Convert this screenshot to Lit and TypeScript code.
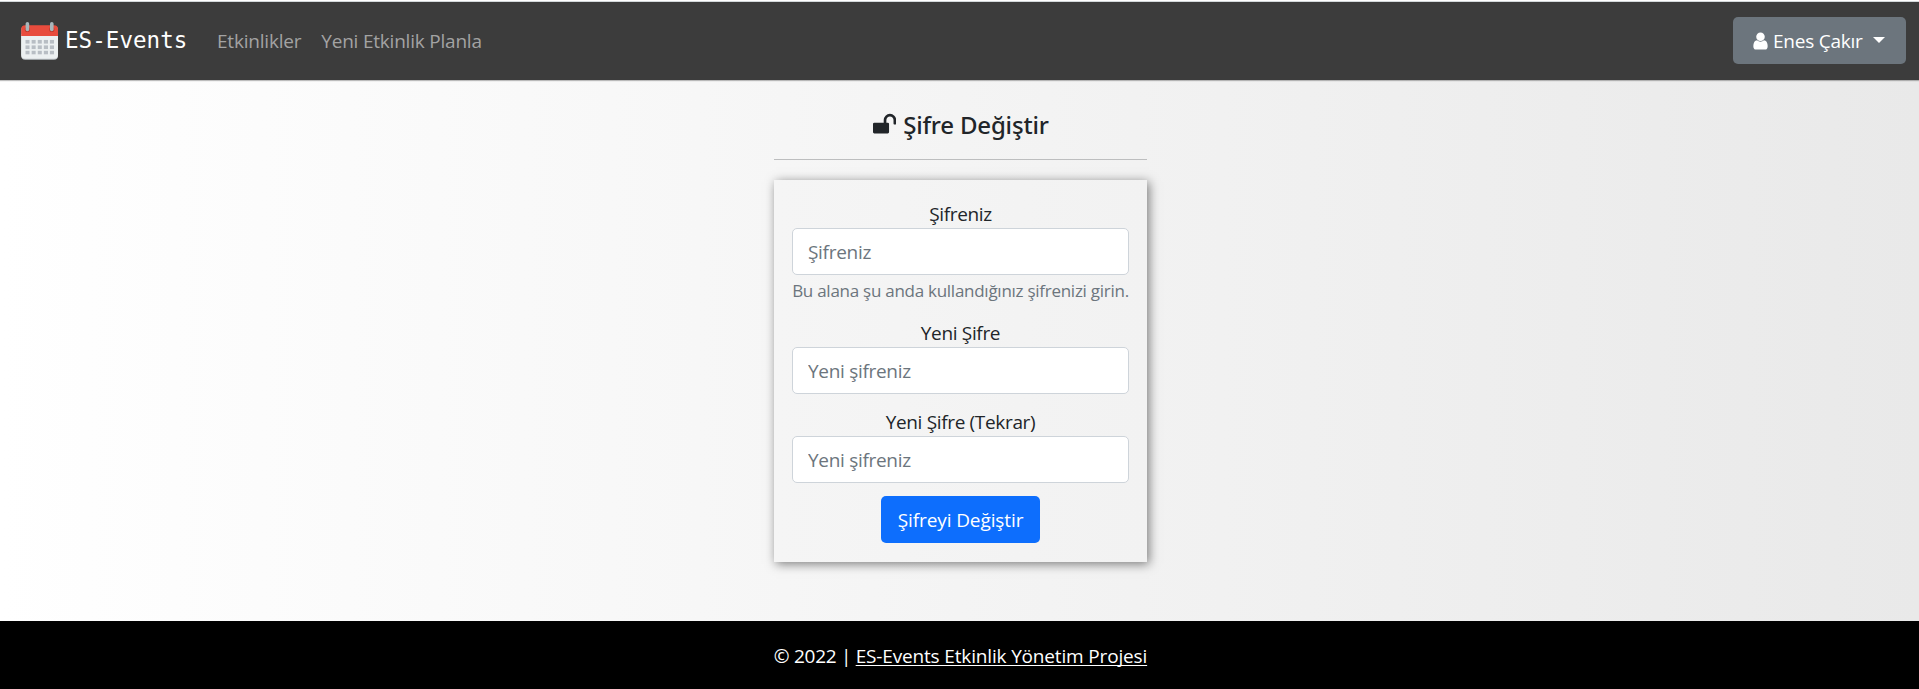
import { LitElement, html, css } from "lit";
import { customElement } from "lit/decorators.js";

const calendar = html`<svg class="calendar" viewBox="0 0 38 38" width="38" height="38">
  <rect x="0.2" y="4" width="36.800" height="33.700" rx="4" fill="#bdc3c7" />
  <path d="M.2 12h36.800v20.800a4 4 0 0 1-4 4H4.200a4 4 0 0 1-4-4z" fill="#ecf0f1" />
  <path d="M4.200 3.300H33a4 4 0 0 1 4 4V14H.2V7.300a4 4 0 0 1 4-4z" fill="#e84c3d" />
  <circle cx="6.400" cy="7.400" r="2.600" fill="#c0392b" />
  <circle cx="30.800" cy="7.400" r="2.600" fill="#c0392b" />
  <rect x="4.600" y="0" width="3.600" height="9.200" rx="1.800" fill="#a9b6bb" />
  <rect x="29" y="0" width="3.600" height="9.200" rx="1.800" fill="#a9b6bb" />
  ${[0, 1, 2].map((r) =>
    [0, 1, 2, 3, 4].map(
      (c) => html`<svg x=${4.3 + c * 6.1} y=${17.8 + r * 5.4} width="4.400" height="4"><rect width="4.400" height="4" fill="#b8bec4" /></svg>`
    )
  )}
</svg>`;

const user = html`<svg class="user" viewBox="0 0 1280 1792" width="15" height="20">
  <path fill="currentColor" d="M1280 1399q0 109-62.500 187T1067 1664H213q-88 0-150.500-78T0 1399q0-85 8.500-160.500t31.500-152 58.500-131 94-89T327 832q131 128 313 128t313-128q76 0 134.500 34.500t94 89 58.500 131 31.500 152 8.500 160.500zM1024 512q0 159-112.500 271.500T640 896 368.500 783.500 256 512t112.500-271.500T640 128t271.500 112.500T1024 512z" />
</svg>`;

const unlock = html`<svg class="unlock" viewBox="0 0 1664 1792" width="23.200" height="25">
  <path fill="currentColor" d="M1664 576v256q0 26-19 45t-45 19h-64q-26 0-45-19t-19-45V576q0-106-75-181t-181-75-181 75-75 181v192h96q40 0 68 28t28 68v576q0 40-28 68t-68 28H96q-40 0-68-28t-28-68V864q0-40 28-68t68-28h672V576q0-185 131.500-316.500T1216 128t316.500 131.500T1664 576z" />
</svg>`;

@customElement("app-root")
export class AppRoot extends LitElement {
  static styles = css`
    * { box-sizing: border-box; }
    :host {
      display: flex;
      flex-direction: column;
      height: 689px;
      overflow: hidden;
      font: 19px/30px "Open Sans", "Noto Sans", sans-serif;
      letter-spacing: -0.34px;
      color: #212529;
      background: linear-gradient(to right, #fff, #e9e9e9);
    }
    a { color: inherit; text-decoration: none; }
    svg { display: block; flex: none; }
    .strip { height: 2px; flex: none; background: #fff; border-bottom: 1px solid #d3d8da; }
    .nav {
      flex: none;
      display: flex;
      align-items: center;
      height: 78px;
      padding: 0 13px 0 21px;
      background: #3c3c3c;
      box-shadow: 0 1px 1px rgba(0, 0, 0, 0.25);
    }
    .brand {
      display: flex;
      align-items: center;
      width: 196px;
      color: #fff;
      font: 22.500px/30px "DejaVu Sans Mono", monospace;
      letter-spacing: 0.05px;
    }
    .calendar { margin-right: 6px; }
    .name { padding-bottom: 3px; }
    .link { color: #a3a3a3; letter-spacing: -0.21px; margin-right: 20px; }
    .account {
      display: flex;
      align-items: center;
      margin: 0 0 1px auto;
      width: 173px;
      height: 47px;
      padding: 0 0 0 20px;
      border: 0;
      border-radius: 5px;
      background: #6c757d;
      color: #fff;
      font: inherit;
      letter-spacing: -0.24px;
    }
    .user { margin-right: 5px; }
    .caret {
      margin: 0 0 2px 10px;
      border: 6px solid transparent;
      border-top-color: currentColor;
      border-bottom: 0;
    }
    .main {
      flex: 1;
      display: flex;
      flex-direction: column;
      align-items: center;
      padding-left: 2px;
    }
    .title {
      display: flex;
      align-items: center;
      width: 373px;
      height: 80px;
      margin: 0 0 20px;
      padding: 10px 0 0 99px;
      border-bottom: 1px solid #bdbebf;
      font: 500 24px/30px "Noto Sans", sans-serif;
      letter-spacing: -0.19px;
    }
    .unlock { margin-right: 7px; }
    .card {
      width: 373px;
      height: 382px;
      padding: 18px 18px 0;
      text-align: center;
      box-shadow: 2px 2px 10px rgba(0, 0, 0, 0.5);
      background: linear-gradient(to right, #f5f5f5, #f2f2f2);
    }
    .field { display: block; }
    .field + .field { margin-top: 12px; }
    .label { display: block; height: 30px; line-height: 32px; }
    .input {
      display: block;
      width: 337px;
      height: 47px;
      padding: 0 15px;
      border: 1px solid #ced4da;
      border-radius: 5px;
      background: #fff;
      font: inherit;
      letter-spacing: -0.3px;
      color: inherit;
    }
    .input::placeholder { color: #6c757d; opacity: 1; }
    .hint {
      display: block;
      height: 30px;
      padding-top: 3px;
      font-size: 17px;
      line-height: 26px;
      letter-spacing: -0.265px;
      color: #6c757d;
      white-space: nowrap;
    }
    .submit {
      width: 159px;
      height: 47px;
      margin-top: 13px;
      padding: 0;
      border: 0;
      border-radius: 5px;
      background: #0d6efd;
      color: #fff;
      font: inherit;
      letter-spacing: -0.1px;
    }
    .footer {
      flex: none;
      height: 68px;
      padding: 20px 0 0 2px;
      text-align: center;
      color: #fff;
      background: #000;
      letter-spacing: -0.16px;
    }
    .year { letter-spacing: -0.3px; }
    .project { text-decoration: underline; text-decoration-thickness: 1px; text-underline-offset: 2px; text-decoration-skip-ink: none; }
  `;

  private field(label: string, placeholder: string, hint = "") {
    return html`<label class="field">
      <span class="label">${label}</span>
      <input class="input" type="password" placeholder=${placeholder} />
      ${hint ? html`<small class="hint">${hint}</small>` : ""}
    </label>`;
  }

  render() {
    return html`
      <div class="strip"></div>
      <nav class="nav">
        <a class="brand">${calendar}<span class="name">ES-Events</span></a>
        <a class="link">Etkinlikler</a>
        <a class="link">Yeni Etkinlik Planla</a>
        <button class="account">${user}<span>Enes Çakır</span><span class="caret"></span></button>
      </nav>
      <main class="main">
        <h1 class="title">${unlock}<span>Şifre Değiştir</span></h1>
        <form class="card">
          ${this.field("Şifreniz", "Şifreniz", "Bu alana şu anda kullandığınız şifrenizi girin.")}
          ${this.field("Yeni Şifre", "Yeni şifreniz")}
          ${this.field("Yeni Şifre (Tekrar)", "Yeni şifreniz")}
          <button class="submit" type="button">Şifreyi Değiştir</button>
        </form>
      </main>
      <footer class="footer"><span class="year">© 2022 | </span><a class="project">ES-Events Etkinlik Yönetim Projesi</a></footer>
    `;
  }
}
